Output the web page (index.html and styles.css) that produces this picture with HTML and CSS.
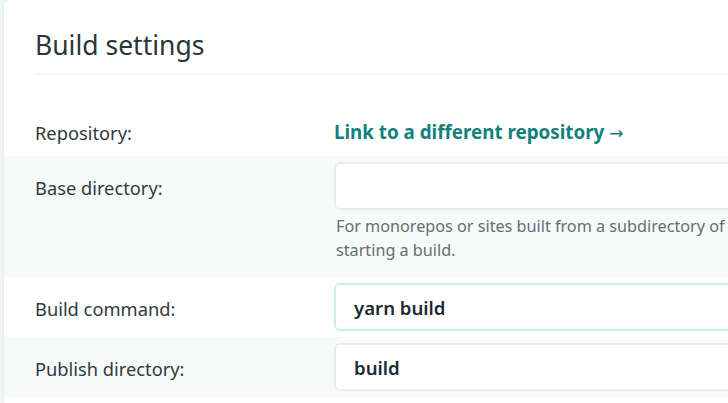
FILE: index.html
```html
<!DOCTYPE html>
<html lang="en">
<head>
<meta charset="utf-8">
<title>Build settings</title>
<link rel="stylesheet" href="styles.css">
</head>
<body>
<section class="card">
  <header class="card-head">
    <h2 class="card-title">Build settings</h2>
  </header>
  <div class="form">
    <div class="row">
      <div class="label">Repository:</div>
      <div class="field">
        <a class="link" href="#">Link to a different repository <span class="arrow">→</span></a>
      </div>
    </div>
    <div class="row alt">
      <div class="label">Base directory:</div>
      <div class="field">
        <div class="input"></div>
        <p class="help">For monorepos or sites built from a subdirectory of a repository, the directory to change to before<br>starting a build.</p>
      </div>
    </div>
    <div class="row">
      <div class="label">Build command:</div>
      <div class="field">
        <div class="input focused">yarn build</div>
      </div>
    </div>
    <div class="row alt">
      <div class="label">Publish directory:</div>
      <div class="field">
        <div class="input">build</div>
      </div>
    </div>
  </div>
</section>
</body>
</html>
```

FILE: styles.css
```css
html, body {
  margin: 0;
  padding: 0;
  overflow: hidden;
}
body {
  background: #eef6f6;
  font-family: "Noto Sans", "Open Sans", sans-serif;
  color: #2e3a40;
  width: 728px;
  height: 403px;
}
.card {
  margin-left: 4px;
  width: 1300px;
  height: 403px;
  background: #ffffff;
  border-top-left-radius: 6px;
  box-shadow: 0 0 3px rgba(0, 60, 60, 0.08);
}
.card-head {
  margin-left: 31px;
  padding-top: 28px;
  padding-bottom: 11px;
  border-bottom: 2px solid #f5f6f6;
}
.card-title {
  margin: 0;
  font-size: 26.5px;
  line-height: 34px;
  font-weight: 400;
  color: #283539;
}
.form {
  padding-top: 32px;
}
.row {
  display: grid;
  grid-template-columns: 299px 900px;
  padding: 6px 0 6px 31px;
}
.row:first-child {
  padding: 0 0 0 31px;
}
.row.alt {
  background: #f8fafa;
}
.label {
  font-size: 18.3px;
  padding-top: 3px;
  line-height: 45px;
  color: #2f3a3f;
}
.field {
  min-width: 0;
}
.link {
  display: inline-block;
  font-size: 18.8px;
  padding-top: 2px;
  line-height: 46px;
  font-weight: 700;
  color: #12807b;
  text-decoration: none;
}
.arrow {
  font-family: "DejaVu Sans", sans-serif;
  font-weight: 400;
  font-size: 17px;
}
.input {
  box-sizing: border-box;
  height: 48px;
  border: 2px solid #eaecec;
  border-radius: 6px;
  background: #ffffff;
  padding: 2px 18px 0;
  font-size: 18.6px;
  line-height: 42px;
  font-weight: 600;
  color: #1c2a31;
}
.input.focused {
  border-color: #c9eee8;
}
.help {
  margin: 4px 0 9px 2px;
  font-size: 16.2px;
  line-height: 24px;
  color: #646e72;
}
```
